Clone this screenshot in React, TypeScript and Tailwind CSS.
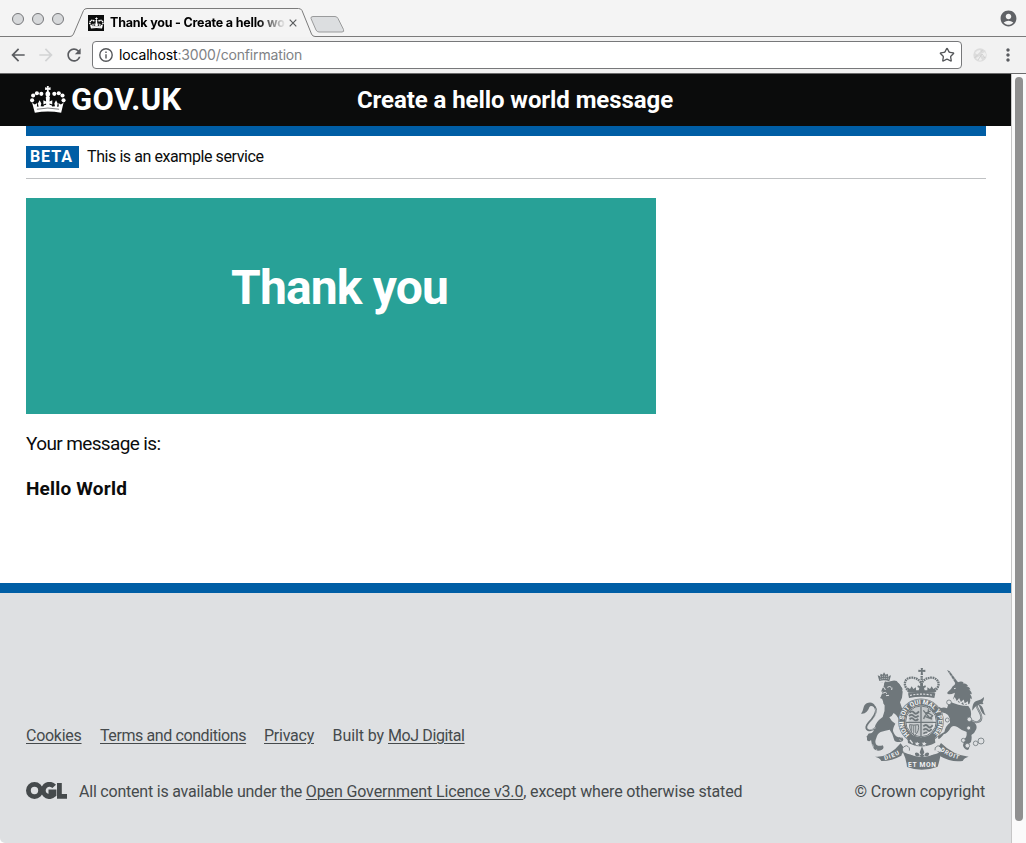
import type { ReactNode } from "react";
import { Star } from "lucide-react";
import { MdAccountCircle, MdArrowBack, MdArrowForward, MdMoreVert, MdRefresh } from "react-icons/md";

function Crown({ className }: { className: string }) {
  return (
    <svg viewBox="92 48 105 79" className={className} fill="currentColor">
      <path d="M106 126 L98 97 L106 102 L113 98 L112 108 L117 109 L115 99 L120 90 L125 99 L123 107 L131 108 L133 104 L139 103 L139 99 L131 102 L131 90 L139 93 L138 80 L150 80 L149 93 L157 90 L157 102 L149 99 L149 103 L155 104 L157 108 L165 107 L163 99 L168 90 L173 99 L171 109 L176 108 L175 98 L182 102 L190 97 L183 126 Q144 119 106 126 Z" />
      <path d="M141 48h6l-1 5 6-1v8l-6-1 1 5q6 4 3 12l-3 6h-6l-3-6q-3-8 3-12l1-5-6 1v-8l6 1z" />
      <circle cx="98" cy="90" r="6" />
      <circle cx="101" cy="76" r="6" />
      <circle cx="112" cy="69" r="6" />
      <circle cx="125" cy="71" r="6" />
      <circle cx="163" cy="71" r="6" />
      <circle cx="176" cy="69" r="6" />
      <circle cx="187" cy="76" r="6" />
      <circle cx="190" cy="90" r="6" />
      <path d="M112 116q32-7 65 0" fill="none" stroke="#0b0c0c" strokeWidth="1.500" />
    </svg>
  );
}

function RoyalArms() {
  return (
    <svg viewBox="33 24 375 306" className="h-[102px] w-[125px]" fill="#6f777b" stroke="none">
      {/* lion */}
      <path d="M88 63l-5-17 7 3 2-8 6 3 4-7 5 7 6-3 2 8 8-3-5 18q-15-6-30-1z" />
      <path d="M90 51q13-5 28 0M91 58q13-5 26-1" fill="none" stroke="#dee0e2" strokeWidth="2.500" strokeDasharray="3 3" />
      <path d="M90 68q14-5 26-1 13-8 24-4l-4 5q12 0 14 6l-5 1q12 4 13 15l-5-3q6 10 1 20l-3-4q3 11-3 20l-3-4q2 10-2 16 10 20 15 35 4 10 6 27-2 8-9 4-6-9-9-25-6-12-15-17-4 9-13 13 6 13 18 19-8 14-7 22 5 16 16 19 12-4 15 6-1 9-13 8-13 2-15-8-4-18-13-29-13 2-27 7-10 5-13 18-6 12 0 20 8 6 19 2 6 8-2 13-14 7-24-2-8-13-9-28-4 8-12 2l0-8q-4-3 2-7 1-8 10-6 8-3 12-19 2-15 23-30 8-18 6-36-6-5-4-10-4-9 2-14-5-10-2-17-5-1-7 1 3-12 10-17-3-9 7-14z" />
      <path d="M104 66l36-3 12 14 6 18-2 18-6 14 8 24-14 4-32-2-14-32-4-12z" />
      <path d="M98 118l-8-4 6-10 16 0zM146 150q14-4 22 6l-4 12q-10 4-16-6z" />
      <path d="M91 83q7-6 12 0l3 7M112 82q7-5 12 0M97 100l9-3 5 4M108 107l9-1M126 83l-1 7" fill="none" stroke="#dee0e2" strokeWidth="3" />
      <path d="M80 202q-14 12-26 8c-12-8 1-22 11-32 11-13 17-27 9-38-7-7-16-6-21 1" fill="none" stroke="#6f777b" strokeWidth="6" />
      <path d="M78 203q-12 9-22 5c-10-7 3-18 12-29 10-13 14-25 6-35" fill="none" stroke="#dee0e2" strokeWidth="1.500" />
      <path d="M33 161c9-9 5-25 17-31 10-6 22-2 25 7-8-4-15-1-17 5-4 12-12 21-25 19z" />
      <path d="M60 257l5 8M68 253l2 9M149 231l7 3M148 239l6 3M77 275l3-7" stroke="#dee0e2" strokeWidth="2" />
      {/* central crown */}
      <path d="M212 24h7l-1 6 8-1v7l-8-1 1 10h-7l1-10-8 1v-7l8 1z" />
      <path d="M177 94C156 76 164 54 183 53c15-1 26 7 31 18 6-11 17-19 33-18 20 3 27 24 6 41" fill="none" stroke="#6f777b" strokeWidth="7" strokeDasharray="5 2" />
      <path d="M215 48v44" stroke="#6f777b" strokeWidth="7" strokeDasharray="5 2" />
      <path d="M175 98l-3-16 8 5 5-8 5 8 8-5 0 9 8 0 2-7-6-3 2-5 7 3 0-8h8l0 8 7-3 2 5-6 3 2 7 8 0 0-9 8 5 5-8 5 8 8-5-4 16z" />
      <path d="M174 100q41-9 82 0l-3 14q-38-8-76 0z" />
      <path d="M180 106q35-7 70 0" fill="none" stroke="#dee0e2" strokeWidth="3.500" strokeDasharray="6 4" />
      {/* unicorn */}
      <path d="M291 30l8 4 27 36-7 4z" />
      <path d="M295 41l6-4M301 51l7-5M308 60l6-4" stroke="#dee0e2" strokeWidth="1.500" />
      <path d="M314 74l4-11 6 4q11-5 17 1l-3 2q13 1 16 8l-5 0q11 4 12 11l-5-1q10 7 9 15l-5-2q6 8 5 17l-5-3q3 9-2 17l-16 4-33-18 6-20q-14 6-22 4-3-4 1-7l9-8q5-10 11-13z" />
      <path d="M303 111l5 13 6-9 6 12 7-9 5 12 8-8 3 11 9-6 1 10" fill="none" stroke="#dee0e2" strokeWidth="4" />
      <path d="M312 86l5-1" stroke="#dee0e2" strokeWidth="3" />
      <path d="M298 124q26 14 57 14 12 15 7 34 4 12 12 17 8 7 5 18-5 13-15 18 2 14-1 21-9 6-8 12 6 9-3 12-12-4-13-14 2-12 12-17 3-11 0-23-16-4-29-15-14-7-20 2-8 16-21 20-10 14-16 14l-1-8q11-9 19-13 4-19 17-28 2-12-6-23-10-10-22-7-7 8-5 14 13 4 11 12-10-2-17-8-4-14 5-24-13-2-16 6-8-3-4-9 7-6 13-4 6-7 14-1 10-4 18 1z" />
      <path d="M344 200q10 16 4 32l-10 10 6 14 8-4 12-18-2-36z" />
      <path d="M364 181c16 11 31 4 30-10 0-15-20-29-13-41 7-8 13-4 17 2" fill="none" stroke="#6f777b" strokeWidth="6" />
      <path d="M364 181c16 11 31 4 30-10 0-15-20-29-13-41" fill="none" stroke="#dee0e2" strokeWidth="1.500" />
      <path d="M367 152c-1-13 3-26 12-29 10-2 18-6 23-12 0 12-6 21-16 24-9 2-13 9-19 17z" />
      <path d="M407 166c-16-5-14-22-22-31 15-3 15 21 22 31z" />
      <g fill="#dee0e2" stroke="#6f777b" strokeWidth="2.400">
        <circle cx="297" cy="127" r="7" />
        <circle cx="292" cy="180" r="6" />
        <circle cx="358" cy="178" r="7" />
        <circle cx="356" cy="204" r="6" />
        <circle cx="340" cy="241" r="6" />
        <circle cx="352" cy="257" r="7" />
        <circle cx="377" cy="250" r="7" />
        <circle cx="393" cy="243" r="9" />
      </g>
      {/* ribbon */}
      <path d="M75 290q41 4 77-40l16 22q-12 4-14 15-31 17-60 16-5-10-19-13zM356 290q-46-4-83-41l-14 22q10 6 12 18 32 19 67 14 5-10 18-13z" />
      <path d="M158 275q57 26 116 0l-3 14q-3 15-8 31-47 18-92 1-2-25-13-46z" />
      <path d="M160 277q-9-15 9-20 12 4 9 15M272 277q8-14-8-20-12 5-9 14" fill="#dee0e2" stroke="#6f777b" strokeWidth="2.500" />
      <path d="M183 284q4-11 3-22l14-3q2-6 15-6 13 0 16 6l14 3q-2 11 3 22-32 13-65 0z" fill="#dee0e2" />
      <path d="M216 259l7 18-7 15-7-15zM207 287q-12 7-12-8 10-5 14 6zM225 287q12 7 12-8-10-5-14 6zM208 285h16l-4 5 1 9-5 3-5-3 1-9z" />
      {/* garter and shield */}
      <circle cx="213" cy="184" r="58" fill="none" stroke="#6f777b" strokeWidth="21" />
      <circle cx="213" cy="184" r="66" fill="none" stroke="#dee0e2" strokeWidth="1.200" />
      <circle cx="213" cy="184" r="46" fill="#dee0e2" stroke="#6f777b" strokeWidth="3" />
      <path id="garter-text" d="M179 224 A52 52 0 1 1 247 224" fill="none" />
      <text fill="#f2f3f4" fontFamily="Roboto, sans-serif" fontWeight="700" fontSize="19">
        <textPath href="#garter-text" textLength="248">HONI SOIT QUI MAL Y PENSE</textPath>
      </text>
      <path d="M176 156q37-32 74 0v30h-74zM176 190h74q-2 26-37 38-35-12-37-38z" opacity=".22" />
      <path d="M213 140v88M168 187h90" stroke="#6f777b" strokeWidth="4" />
      <path d="M179 158q7-8 13 0t15-4M177 168q8-7 14 0t15-1M179 178q7-7 12 0t14-1M220 199q8-8 14 0t14-3M220 210q8-7 13 0t12-3M220 221q7-6 12-3" fill="none" stroke="#6f777b" strokeWidth="5.500" />
      <path d="M221 177q4-15 15-20M220 151l19 23q6-1 9-7l-13-8 0-11M226 170l20 7M225 160l17-7" fill="none" stroke="#6f777b" strokeWidth="4" />
      <path d="M179 194q12 3 26 0 4 19-11 33-16-13-15-33z" fill="none" stroke="#6f777b" strokeWidth="3" />
      <path d="M185 196v20M191 196v28M197 196v24" stroke="#6f777b" strokeWidth="2.500" />
      <path d="M172 230q41 30 82 0l2 18q-41 22-82 1z" />
      <path d="M202 245l2 4 5 0-4 4 1 5-5-3-5 2 2-5-4-4 6 0zM223 245l2 4 5 0-4 4 1 5-5-3-5 2 2-5-4-4 6 0z" fill="#dee0e2" />
      <path d="M180 240l8 10" stroke="#dee0e2" strokeWidth="4" />
      <path id="motto-left" d="M104 300q29-6 54-23" fill="none" />
      <path id="motto-right" d="M270 272q30 21 62 27" fill="none" />
      <g fill="#f2f3f4" fontFamily="Roboto, sans-serif" fontWeight="700">
        <text fontSize="18"><textPath href="#motto-left" textLength="49">DIEU</textPath></text>
        <text fontSize="18"><textPath href="#motto-right" textLength="62">DROIT</textPath></text>
        <text x="174" y="320" fontSize="20" textLength="84">ET MON</text>
      </g>
    </svg>
  );
}

function BrowserChrome() {
  return (
    <div className="font-[Inter,sans-serif]">
      <div className="relative h-[37px] bg-[#f4f4f4]">
        <svg viewBox="0 0 1026 37" className="absolute inset-0 h-[37px] w-[1026px]" fill="none" stroke="#7b7b7b">
          <path d="M0 36.500H70Q72.500 36.500 73.500 34L83.500 10.500Q84.500 8.500 87 8.500H298.500Q301 8.500 302 10.500L311.500 34Q312.500 36.500 315 36.500H1026" />
          <path d="M313 16.500h22q2 0 3 2l5.500 11q1 2.500-1.500 2.500h-23q-2 0-3-2l-5-11.500q-.5-2 2-2z" fill="#dcdee0" stroke="#9a9b9c" />
        </svg>
        <div className="relative flex h-[37px] items-start">
          <div className="flex w-[88px] gap-2 pt-[13px] pl-3">
            <i className="size-3 rounded-full border border-[#76777a] bg-[#d6d8da]" />
            <i className="size-3 rounded-full border border-[#76777a] bg-[#d6d8da]" />
            <i className="size-3 rounded-full border border-[#76777a] bg-[#d6d8da]" />
          </div>
          <div className="mt-[15px] flex size-4 items-center justify-center bg-[#0b0c0c] text-white">
            <Crown className="h-[12px] w-[15px]" />
          </div>
          <div className="mt-[13px] ml-[6px] w-[176px] bg-linear-to-r from-black from-84% to-transparent bg-clip-text text-[12.500px] leading-5 font-bold tracking-[-0.2px] whitespace-nowrap text-transparent">
            Thank you - Create a hello wo
          </div>
          <svg viewBox="0 0 8 8" className="mt-[19px] ml-[3px] size-2" stroke="#5a5c5e" strokeWidth="1.200">
            <path d="M.7.700l6.600 6.600M7.300.700L.700 7.300" />
          </svg>
          <MdAccountCircle className="mt-[9px] mr-[8px] ml-auto size-[19px] text-[#606266]" />
        </div>
      </div>
      <div className="flex h-9 items-center bg-[#f2f2f2] pl-2 text-[#5a5c60]">
        <MdArrowBack className="size-5" />
        <MdArrowForward className="ml-2 size-5 text-[#d2d3d4]" />
        <MdRefresh className="ml-2 size-5" />
        <div className="ml-2 flex h-7 w-[870px] items-center rounded-[4px] border border-[#77787a] bg-white pr-[6px] pl-[6px]">
          <svg viewBox="0 0 14 14" className="size-[14px]" fill="none" stroke="#55575a" strokeWidth="1.400">
            <circle cx="7" cy="7" r="6.200" />
            <path d="M7 6.200v4.200M7 3.500v1.500" />
          </svg>
          <span className="ml-[6px] text-sm tracking-[-0.16px] text-[#808285]">
            <span className="text-black">localhost</span>:3000/confirmation
          </span>
          <Star className="ml-auto size-4 text-[#55575a]" strokeWidth={2} />
        </div>
        <svg viewBox="0 0 14 14" className="ml-[11px] size-[14px]">
          <circle cx="7" cy="7" r="6.700" fill="#dcdcdc" />
          <path d="M2 5q2-3 5-3l1 2-3 3zM8 6l4-2q2 3 0 5l-3-1zM3 10l4-2 2 4q-3 2-6-2z" fill="#efefef" />
          <path d="M1.500 10L9.500 2M5 12l4-6 3 4" stroke="#c9c9c9" fill="none" strokeWidth=".8" />
        </svg>
        <MdMoreVert className="ml-[11px] size-5" />
      </div>
      <div className="h-px bg-[#6b6b6c]" />
    </div>
  );
}

function FooterLink({ children }: { children: ReactNode }) {
  return <a className="underline decoration-1 underline-offset-2">{children}</a>;
}

export default function App() {
  return (
    <div className="h-[843px] w-[1026px] overflow-hidden bg-white font-[Roboto,sans-serif] text-[#0b0c0c]">
      <BrowserChrome />
      <div className="flex h-[769px]">
        <div className="flex w-[1011px] flex-col">
          <header className="flex h-[52px] shrink-0 items-center bg-[#0b0c0c] text-white">
            <div className="flex w-[357px] items-center pl-[30px]">
              <Crown className="mb-px h-[27px] w-[36px]" />
              <span className="ml-[5px] text-[31px] leading-8 font-bold tracking-[0.4px]">GOV.UK</span>
            </div>
            <span className="text-2xl font-bold tracking-[-0.08px]">Create a hello world message</span>
          </header>
          <main className="flex w-[986px] flex-1 flex-col pl-[26px]">
            <div className="h-[10px] bg-[#005ea5]" />
            <div className="flex h-[43px] items-center border-b border-[#bfc1c3]">
              <strong className="flex h-[22px] w-[53px] items-center bg-[#005ea5] pl-[4px] text-base font-bold tracking-[0.9px] text-white">BETA</strong>
              <span className="ml-2 text-base tracking-[-0.42px]">This is an example service</span>
            </div>
            <div className="mt-[19px] flex h-[216px] w-[630px] justify-center bg-[#28a197] pt-[60px] pr-[3px]">
              <h1 className="text-5xl leading-[60px] font-bold tracking-[-0.84px] text-white">Thank you</h1>
            </div>
            <p className="mt-[17px] text-[19px] leading-[25px] tracking-[-0.62px]">Your message is:</p>
            <p className="mt-5 text-[19px] leading-[25px] font-bold tracking-[0.19px]">Hello World</p>
          </main>
          <footer className="flex h-[260px] shrink-0 justify-between rounded-bl-[5px] border-t-10 border-[#005ea5] bg-[#dee0e2] pr-[25px] pl-[26px] text-base leading-5 text-[#454a4c]">
            <div className="pt-[133px]">
              <div className="flex tracking-[-0.4px]">
                <span className="w-[74px] tracking-[-0.27px]"><FooterLink>Cookies</FooterLink></span>
                <span className="w-[164px]"><FooterLink>Terms and conditions</FooterLink></span>
                <span className="w-[68.500px] tracking-[-0.24px]"><FooterLink>Privacy</FooterLink></span>
                <span><span className="tracking-[-0.08px]">Built by </span><FooterLink>MoJ Digital</FooterLink></span>
              </div>
              <div className="mt-9 flex items-center">
                <svg viewBox="0 0 41 17" className="mr-[12px] mb-[3px] h-[17px] w-[41px]" fill="none" stroke="#454a4c" strokeWidth="4.800">
                  <circle cx="8.500" cy="8.500" r="6.100" />
                  <path d="M28.200 4.400A6.200 6.200 0 1 0 28 12.700V9.800H22.500M33.400 1V14.300H41" />
                </svg>
                <span>
                  <span className="tracking-[-0.21px]">All content is available under the </span>
                  <span className="tracking-[-0.13px]"><FooterLink>Open Government Licence v3.0</FooterLink></span>
                  <span className="tracking-[-0.17px]">, except where otherwise stated</span>
                </span>
              </div>
            </div>
            <div className="flex flex-col items-end pt-[75px]">
              <RoyalArms />
              <span className="mt-3 mr-px tracking-[-0.12px]">© Crown copyright</span>
            </div>
          </footer>
        </div>
        <div className="flex w-[15px] justify-center border-l border-[#c6c6c6] bg-[#fafafa] pt-[3px]">
          <div className="h-[744px] w-2 rounded-full bg-[#909090]" />
        </div>
      </div>
    </div>
  );
}
